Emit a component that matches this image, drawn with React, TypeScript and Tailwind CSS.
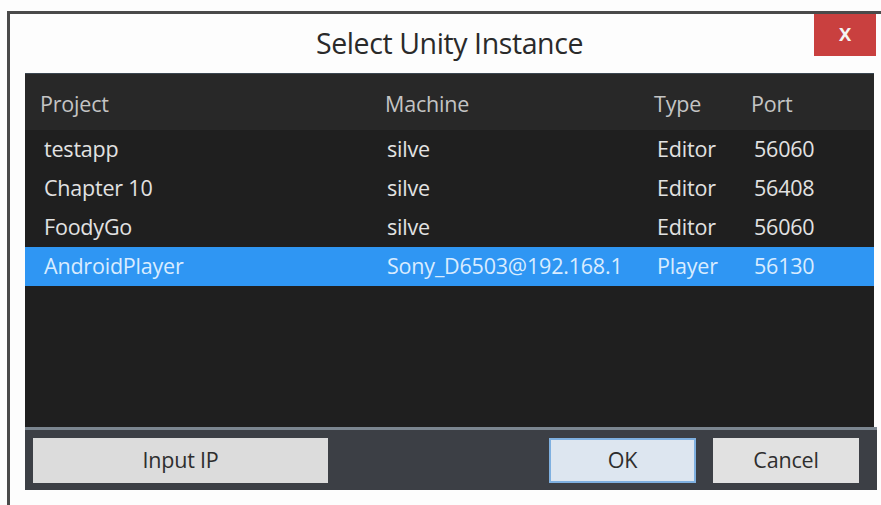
import React from "react";

type Instance = {
  project: string;
  machine: string;
  type: string;
  port: string;
  selected?: boolean;
};

const instances: Instance[] = [
  { project: "testapp", machine: "silve", type: "Editor", port: "56060" },
  { project: "Chapter 10", machine: "silve", type: "Editor", port: "56408" },
  { project: "FoodyGo", machine: "silve", type: "Editor", port: "56060" },
  {
    project: "AndroidPlayer",
    machine: "Sony_D6503@192.168.1",
    type: "Player",
    port: "56130",
    selected: true,
  },
];

const font = { fontFamily: '"Open Sans", "Noto Sans", sans-serif' };

export default function App() {
  return (
    <div
      className="w-[881px] h-[505px] bg-[#fdfdfd] overflow-hidden pl-[7px] pt-[11px]"
      style={font}
    >
      <div className="h-full border-l-[3px] border-t-[3px] border-[#4a4a4a] bg-[#fdfdfd] flex flex-col">
        {/* title bar */}
        <div className="h-[59px] shrink-0 grid grid-cols-[1fr_auto_1fr] items-start">
          <div />
          <div className="pt-[11px] pl-[8px] text-[28.5px] leading-[36px] text-[#2a2a2a] tracking-[-0.4px] whitespace-nowrap">
            Select Unity Instance
          </div>
          <div className="flex justify-end pr-[5px]">
            <button className="w-[62px] h-[42px] bg-[#c9403f] flex items-center justify-center text-[#f4f4f4] text-[23px] font-semibold leading-none pb-[5px]">
              x
            </button>
          </div>
        </div>

        {/* instance list */}
        <div className="ml-[15px] mr-[7px] h-[354px] shrink-0 bg-[#1f1f1f] flex flex-col border-t border-[#3b4650]">
          <div className="h-[56px] shrink-0 bg-[#282828] grid grid-cols-[345px_269px_97px_1fr] pl-[15px] pt-[15px] text-[21.5px] leading-[30px] text-[#c4c4c4] tracking-[-0.2px]">
            <div>Project</div>
            <div>Machine</div>
            <div>Type</div>
            <div>Port</div>
          </div>
          {instances.map((it) => (
            <div
              key={it.project}
              className={
                it.selected
                  ? "h-[39px] shrink-0 bg-[#2f96f3] text-[#d9ecff] grid grid-cols-[343px_270px_97px_1fr] pl-[19px] items-center text-[21.5px] tracking-[-0.2px]"
                  : "h-[39px] shrink-0 text-[#e2e2e2] grid grid-cols-[343px_270px_97px_1fr] pl-[19px] items-center text-[21.5px] tracking-[-0.2px]"
              }
            >
              <div className="whitespace-nowrap">{it.project}</div>
              <div className="whitespace-nowrap">{it.machine}</div>
              <div>{it.type}</div>
              <div>{it.port}</div>
            </div>
          ))}
        </div>

        {/* button bar */}
        <div className="ml-[15px] mr-[4px] shrink-0 border-t-[3px] border-[#7b8690] bg-[#3c3f45] h-[63px] flex items-start pt-[8px] pl-[8px] pr-[18px] text-[21.5px] text-[#2e2e2e] tracking-[-0.2px]">
          <button className="w-[295px] h-[45px] bg-[#dcdcdc] flex items-center justify-center">
            Input IP
          </button>
          <div className="flex-1" />
          <button className="w-[147px] h-[45px] bg-[#dde6f0] border-2 border-[#7fb0e0] flex items-center justify-center">
            OK
          </button>
          <button className="ml-[17px] w-[146px] h-[45px] bg-[#e1e1e1] flex items-center justify-center">
            Cancel
          </button>
        </div>
      </div>
    </div>
  );
}
